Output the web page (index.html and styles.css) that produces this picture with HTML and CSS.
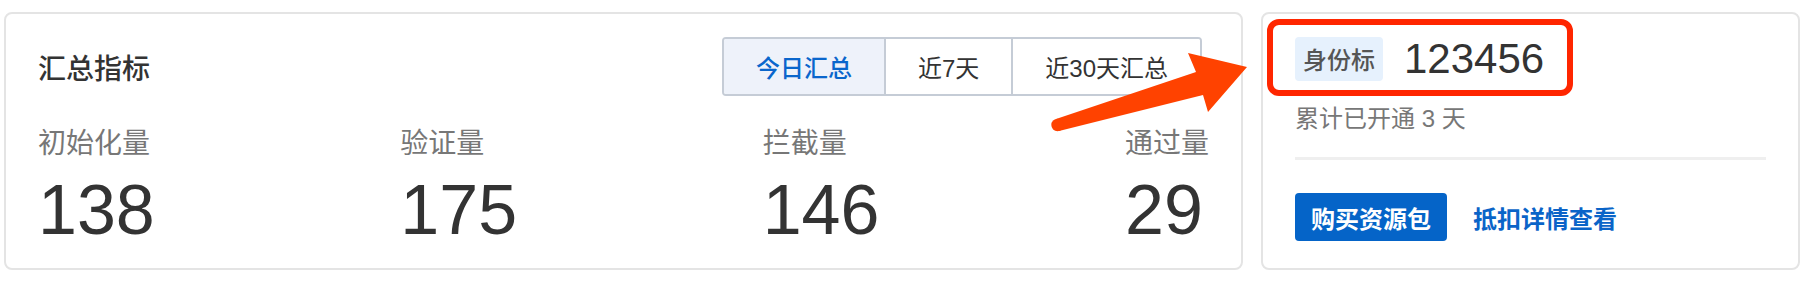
FILE: index.html
```html
<!DOCTYPE html>
<html lang="zh-CN">
<head>
    <meta charset="UTF-8">
    <meta name="viewport" content="width=device-width, initial-scale=1.0">
    <title>汇总指标</title>
    <link rel="stylesheet" href="styles.css">
</head>
<body>
    <div class="page">
        <div class="card summary">
            <div class="summary-head">
                <h2 class="title">汇总指标</h2>
                <div class="tabs">
                    <button class="tab active">今日汇总</button>
                    <button class="tab">近7天</button>
                    <button class="tab">近30天汇总</button>
                </div>
            </div>
            <div class="stats">
                <div class="stat">
                    <div class="stat-label">初始化量</div>
                    <div class="stat-value">138</div>
                </div>
                <div class="stat">
                    <div class="stat-label">验证量</div>
                    <div class="stat-value">175</div>
                </div>
                <div class="stat">
                    <div class="stat-label">拦截量</div>
                    <div class="stat-value">146</div>
                </div>
                <div class="stat">
                    <div class="stat-label">通过量</div>
                    <div class="stat-value">29</div>
                </div>
            </div>
        </div>

        <div class="card account">
            <div class="account-id">
                <span class="badge">身份标</span>
                <span class="id-number">123456</span>
            </div>
            <div class="days">累计已开通 3 天</div>
            <div class="divider"></div>
            <div class="actions">
                <button class="btn-primary">购买资源包</button>
                <a class="link" href="#">抵扣详情查看</a>
            </div>
        </div>
    </div>

    <!-- annotation overlay -->
    <div class="mark-box"></div>
    <svg class="mark-arrow" width="1812" height="282" viewBox="0 0 1812 282">
        <polygon points="1056,119 1196,72 1188,53 1247,67 1208,112 1203,95 1059,131" fill="#ff4200"/>
        <circle cx="1057.5" cy="125" r="6.2" fill="#ff4200"/>
    </svg>
</body>
</html>
```

FILE: styles.css
```css
body {
    margin: 0;
    background-color: #fff;
    font-family: "Liberation Sans", "Noto Sans CJK SC", sans-serif;
    color: #333;
    position: relative;
}
.page {
    display: flex;
    gap: 18px;
    padding: 12px 12px 12px 4px;
    height: 282px;
    box-sizing: border-box;
}
.card {
    border: 2px solid #e4e4e4;
    border-radius: 8px;
    background-color: #fff;
    box-sizing: border-box;
}
.summary {
    flex: 1;
    padding: 23px 32px;
}
.summary-head {
    display: flex;
    justify-content: space-between;
    align-items: center;
}
.title {
    margin: 0;
    font-family: "Noto Sans CJK SC", sans-serif;
    font-size: 28px;
    font-weight: 500;
    line-height: 40px;
    color: #333;
}
.tabs {
    display: flex;
    border: 2px solid #c5ccd6;
    border-radius: 4px;
    margin-right: 7px;
    overflow: hidden;
}
.tab {
    height: 55px;
    padding: 0 32px;
    border: none;
    border-left: 2px solid #c5ccd6;
    background-color: #fff;
    font-family: "Liberation Sans", "Noto Sans CJK SC", sans-serif;
    font-size: 24px;
    color: #333;
    cursor: pointer;
}
.tab:first-child {
    border-left: none;
}
.tab.active {
    background-color: #eef2fa;
    color: #0a66cc;
    font-weight: 500;
}
.stats {
    display: flex;
    justify-content: space-between;
    margin-top: 25px;
}
.stat-label {
    font-family: "Noto Sans CJK SC", sans-serif;
    font-size: 28px;
    line-height: 40px;
    color: #777;
}
.stat-value {
    margin-top: 14px;
    font-size: 70px;
    line-height: 70px;
    color: #333;
}
.account {
    width: 539px;
    padding: 23px 32px;
}
.account-id {
    display: flex;
    align-items: center;
}
.badge {
    height: 44px;
    line-height: 44px;
    padding: 0 8px;
    border-radius: 4px;
    background-color: #e6f1fd;
    font-family: "Noto Sans CJK SC", sans-serif;
    font-size: 24px;
    font-weight: 500;
    color: #555;
}
.id-number {
    margin-left: 21px;
    font-size: 42px;
    line-height: 44px;
    color: #333;
}
.days {
    margin-top: 22px;
    font-size: 24px;
    line-height: 32px;
    color: #777;
}
.divider {
    margin-top: 22px;
    height: 3px;
    background-color: #efefef;
}
.actions {
    display: flex;
    align-items: center;
    gap: 26px;
    margin-top: 33px;
}
.btn-primary {
    height: 48px;
    padding: 0 16px;
    border: none;
    border-radius: 4px;
    background-color: #0564c8;
    color: #fff;
    font-family: "Noto Sans CJK SC", sans-serif;
    font-size: 24px;
    font-weight: 600;
    cursor: pointer;
}
.link {
    font-family: "Noto Sans CJK SC", sans-serif;
    font-size: 24px;
    font-weight: 600;
    color: #0a64c8;
    text-decoration: none;
}
.mark-box {
    position: absolute;
    left: 1267px;
    top: 19px;
    width: 306px;
    height: 77px;
    box-sizing: border-box;
    border: 6px solid #ff2600;
    border-radius: 12px;
}
.mark-arrow {
    position: absolute;
    left: 0;
    top: 0;
    pointer-events: none;
}
```
